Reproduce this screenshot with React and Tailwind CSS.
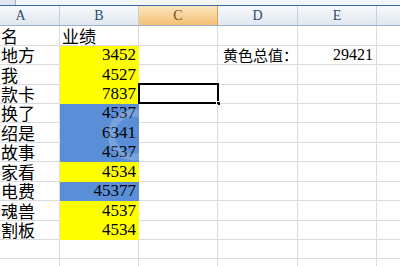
import React from 'react';

const YELLOW = 'bg-[#ffff00] border-[#ffff00]';
const BLUE = 'bg-[#5a8fd8] border-[#5a8fd8]';

const rows = [
  { a: '名', b: '业绩', h: 'h-[20px]', left: true },
  { a: '地方', b: '3452', h: 'h-[19px]', fill: YELLOW, d: '黄色总值：', e: '29421' },
  { a: '我', b: '4527', h: 'h-[20px]', fill: YELLOW },
  { a: '款卡', b: '7837', h: 'h-[19px]', fill: YELLOW, selected: true },
  { a: '换了', b: '4537', h: 'h-[19px]', fill: BLUE },
  { a: '绍是', b: '6341', h: 'h-[20px]', fill: BLUE },
  { a: '故事', b: '4537', h: 'h-[19px]', fill: BLUE },
  { a: '家看', b: '4534', h: 'h-[20px]', fill: YELLOW },
  { a: '电费', b: '45377', h: 'h-[19px]', fill: BLUE },
  { a: '魂兽', b: '4537', h: 'h-[20px]', fill: YELLOW },
  { a: '割板', b: '4534', h: 'h-[19px]', fill: YELLOW },
  { h: 'h-[19px]' },
  { h: 'h-[19px]' },
];

const cjk = { fontFamily: '"Noto Sans CJK SC", sans-serif' };
const serif = { fontFamily: '"Liberation Serif", "Noto Sans CJK SC", serif' };

function Header({ label, w, active, pr }) {
  return (
    <div
      className={`${w} h-full shrink-0 flex items-center justify-center border-r text-[14px] ${
        active
          ? 'bg-gradient-to-b from-[#fbe6bd] to-[#f3bf72] border-[#e6a04a] text-[#6a4a18]'
          : 'bg-gradient-to-b from-[#f7f9fc] to-[#e1e7ef] border-[#c3cfdd] text-[#2c4a6e]'
      } ${pr || ''}`}
      style={serif}
    >
      {label}
    </div>
  );
}

export default function App() {
  return (
    <div className="w-[400px] h-[266px] overflow-hidden bg-white relative select-none">
      {/* formula bar remains */}
      <div className="h-[5px] flex bg-[#f2f5fa]">
        <div className="w-[16px] bg-[#dfe6ef] border-r border-[#9fb3cb]" />
        <div className="flex-1" />
      </div>
      <div className="h-[1px] bg-[#3c6aa5]" />

      {/* column headers */}
      <div className="h-[20px] flex border-b border-[#9eb3cb]">
        <Header label="A" w="w-[60px]" pr="pr-[18px]" />
        <Header label="B" w="w-[79px]" />
        <Header label="C" w="w-[79px]" active />
        <Header label="D" w="w-[80px]" />
        <Header label="E" w="w-[79px]" />
        <Header label="" w="w-[40px]" />
      </div>

      {/* grid */}
      <div className="flex flex-col">
        {rows.map((r, i) => (
          <div key={i} className={`${r.h} flex shrink-0`}>
            <div
              className="w-[60px] shrink-0 border-r border-b border-[#dadcdd] pl-[1px] flex items-center text-[17px] leading-[18px] text-black whitespace-nowrap"
              style={cjk}
            >
              {r.a}
            </div>
            <div
              className={`w-[79px] shrink-0 border-r border-b flex items-center leading-[18px] text-black text-[17px] ${
                r.fill || 'border-[#dadcdd]'
              } ${r.left ? 'justify-start pl-[2px]' : 'justify-end pr-[2px]'}`}
              style={r.left ? cjk : serif}
            >
              {r.b}
            </div>
            <div className="w-[79px] shrink-0 border-r border-b border-[#dadcdd] relative">
              {r.selected && (
                <div className="absolute left-[-1px] top-[-2px] w-[81px] h-[21px] border-2 border-black">
                  <div className="absolute right-[-4px] bottom-[-4px] w-[5px] h-[5px] bg-black border border-white" />
                </div>
              )}
            </div>
            <div
              className="w-[80px] shrink-0 border-r border-b border-[#dadcdd] flex items-center pl-[5px] text-[15px] leading-[18px] text-black whitespace-nowrap"
              style={cjk}
            >
              {r.d}
            </div>
            <div
              className="w-[79px] shrink-0 border-r border-b border-[#dadcdd] flex items-center justify-end pr-[3px] text-[16px] leading-[18px] text-black"
              style={serif}
            >
              {r.e}
            </div>
            <div className="w-[40px] shrink-0 border-r border-b border-[#dadcdd]" />
          </div>
        ))}
      </div>

      {/* faint watermark over the blue cells */}
      <svg className="absolute left-[100px] top-[108px] pointer-events-none" width="40" height="54" viewBox="0 0 40 54">
        <path d="M40 6 A22 22 0 1 0 40 48" fill="none" stroke="#ffffff" strokeOpacity="0.18" strokeWidth="7" />
      </svg>
    </div>
  );
}
